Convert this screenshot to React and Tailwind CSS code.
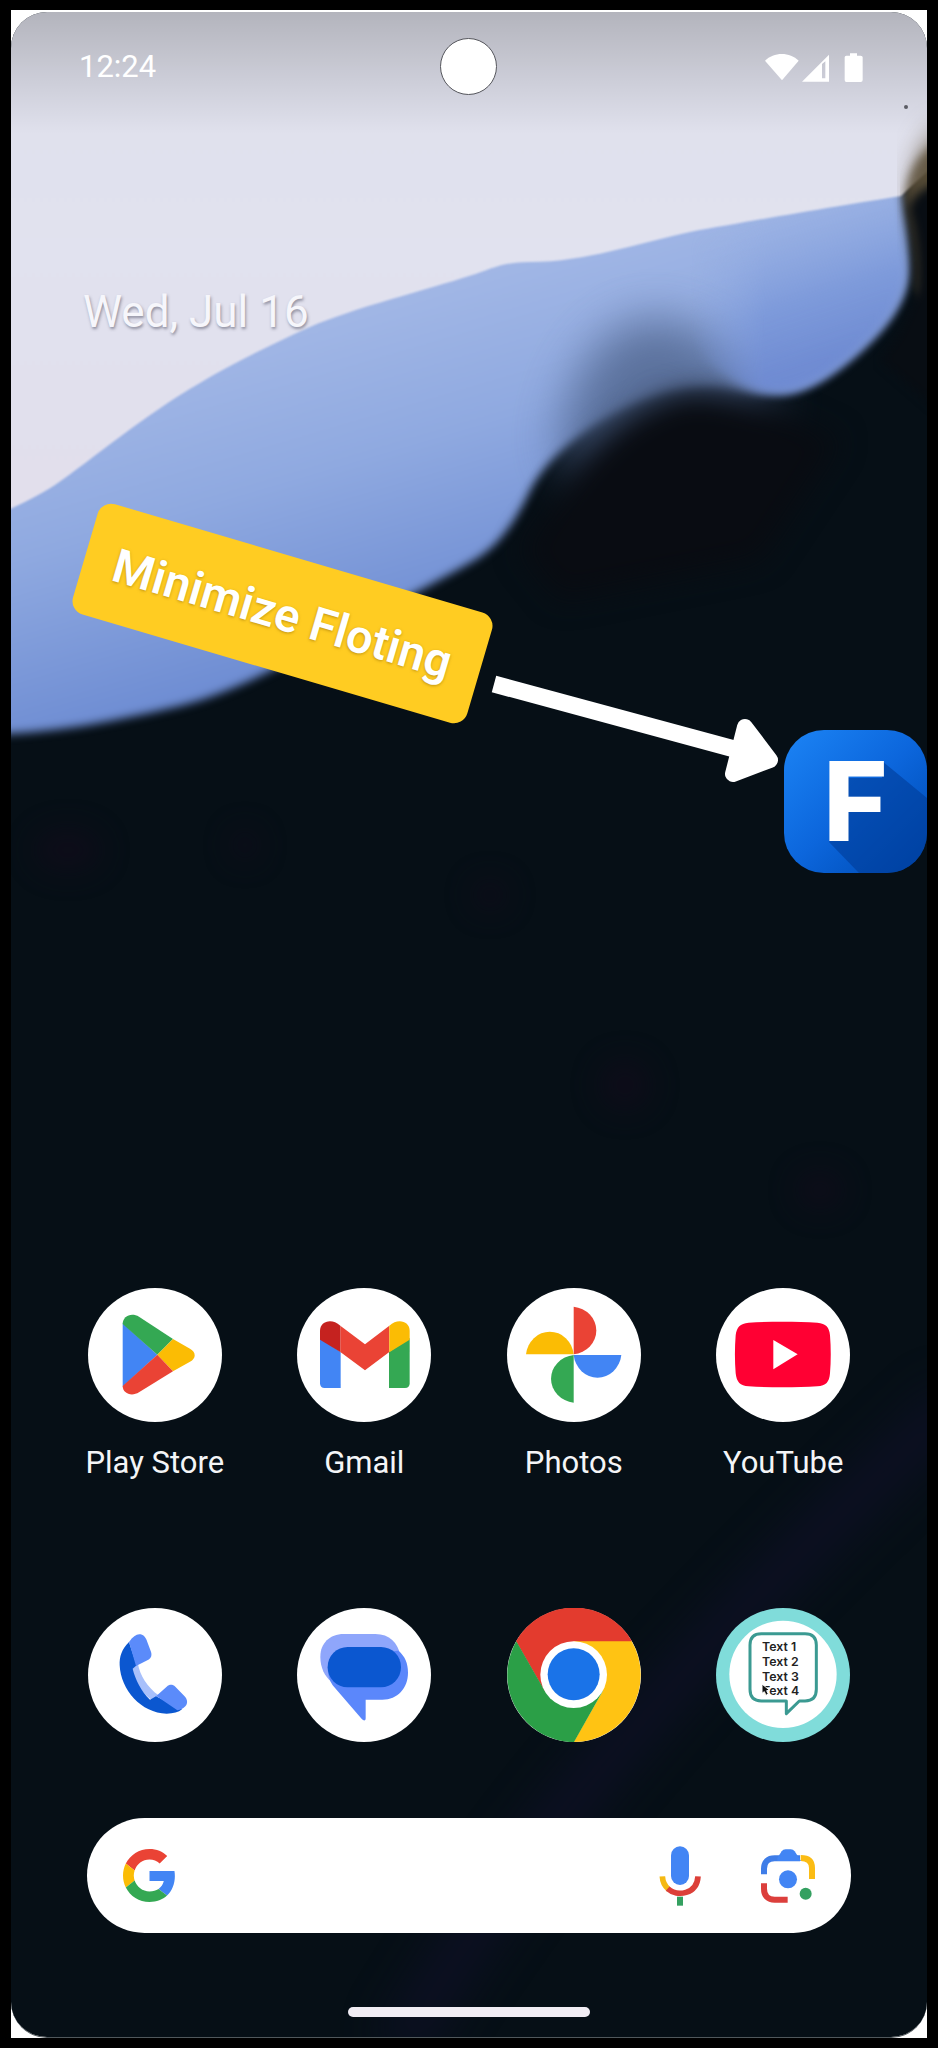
import React from "react";

function Wallpaper() {
  return (
    <svg
      className="absolute inset-0 h-full w-full"
      viewBox="11 12 916 2025"
      preserveAspectRatio="none"
      aria-hidden="true"
    >
      <defs>
        <linearGradient id="mist" x1="0" y1="0" x2="0" y2="1">
          <stop offset="0" stopColor="#e0e1ec" />
          <stop offset="0.5" stopColor="#e1e2ef" />
          <stop offset="1" stopColor="#e2dfec" />
        </linearGradient>
        <linearGradient id="petal" gradientUnits="userSpaceOnUse" x1="330" y1="300" x2="430" y2="640">
          <stop offset="0" stopColor="#a3b8e6" />
          <stop offset="0.45" stopColor="#8fa9e0" />
          <stop offset="1" stopColor="#6c8bd2" />
        </linearGradient>
        <linearGradient id="fold" gradientUnits="userSpaceOnUse" x1="750" y1="215" x2="800" y2="370">
          <stop offset="0" stopColor="#8ea9e2" stopOpacity="0" />
          <stop offset="0.6" stopColor="#7a97d9" stopOpacity="0.85" />
          <stop offset="1" stopColor="#6f8bd2" />
        </linearGradient>
        <linearGradient id="fade" gradientUnits="userSpaceOnUse" x1="690" y1="0" x2="765" y2="0">
          <stop offset="0" stopColor="#000" />
          <stop offset="1" stopColor="#fff" />
        </linearGradient>
        <mask id="foldMask" maskUnits="userSpaceOnUse" x="600" y="150" width="340" height="300">
          <rect x="600" y="150" width="340" height="300" fill="url(#fade)" />
        </mask>
        <linearGradient id="shade" x1="0" y1="0" x2="0" y2="1">
          <stop offset="0" stopColor="#000" stopOpacity="0.2" />
          <stop offset="0.4" stopColor="#000" stopOpacity="0.12" />
          <stop offset="1" stopColor="#000" stopOpacity="0" />
        </linearGradient>
        <filter id="blur1" x="-10%" y="-10%" width="120%" height="120%" colorInterpolationFilters="sRGB">
          <feGaussianBlur stdDeviation="1" />
        </filter>
        <filter id="blur5" x="-10%" y="-10%" width="120%" height="120%" colorInterpolationFilters="sRGB">
          <feGaussianBlur stdDeviation="5" />
        </filter>
        <filter id="blur14" x="-60%" y="-60%" width="220%" height="220%" colorInterpolationFilters="sRGB">
          <feGaussianBlur stdDeviation="14" />
        </filter>
        <filter id="blur24" x="-60%" y="-60%" width="220%" height="220%" colorInterpolationFilters="sRGB">
          <feGaussianBlur stdDeviation="24" />
        </filter>
      </defs>
      <rect x="11" y="12" width="916" height="2025" fill="#060f16" />
      <path
        filter="url(#blur24)"
        fill="none"
        stroke="#131030"
        strokeWidth="40"
        opacity="0.6"
        d="M400 2050C520 1840 700 1640 960 1400"
      />
      <g filter="url(#blur14)" fill="#150a1c" opacity="0.5">
        <ellipse cx="68" cy="850" rx="34" ry="22" />
        <ellipse cx="245" cy="845" rx="14" ry="16" />
        <ellipse cx="490" cy="895" rx="18" ry="16" />
        <ellipse cx="625" cy="1085" rx="26" ry="26" />
        <ellipse cx="820" cy="1190" rx="24" ry="20" />
      </g>
      <path
        filter="url(#blur5)"
        fill="url(#petal)"
        d="M-20 180H901C903 215 909 245 908 275C905 305 885 328 862 350C835 374 805 396 775 395C745 396 730 388 710 388C670 388 640 400 604 420C570 440 546 462 532 487C518 516 505 540 478 558C440 581 395 602 340 634C285 664 230 694 180 706C110 722 60 733 -20 735Z"
      />
      <path filter="url(#blur24)" fill="#4a5f86" opacity="0.75" d="M560 450C565 390 590 335 640 320C690 312 730 350 780 400L700 470L590 500Z" />
      <path filter="url(#blur14)" fill="#090c12" d="M556 500C580 455 622 412 680 394C720 388 745 404 780 412L840 440L760 560L560 600L520 550Z" />
      <g mask="url(#foldMask)">
        <path
          filter="url(#blur5)"
          fill="url(#fold)"
          d="M660 190H899C904 230 907 250 906 275C903 303 884 326 860 348C834 372 804 393 775 392C750 392 732 380 712 366C680 340 660 270 660 190Z"
        />
      </g>
      <path
        filter="url(#blur1)"
        fill="url(#mist)"
        d="M0 0H940V160L901 196C850 204 750 221 690 232C635 244 585 262 530 262C500 262 490 270 469 276C433 288 350 309 310 327C265 347 225 368 200 383C150 411 90 461 55 485C35 498 20 504 0 514Z"
      />
      <path filter="url(#blur14)" d="M950 125C926 138 914 170 918 210L950 300Z" fill="#5c4c30" />
      <path filter="url(#blur5)" d="M950 138C928 146 909 160 905 196C914 230 918 250 916 290L950 340Z" fill="#5c503a" opacity="0.8" />
      <path filter="url(#blur5)" d="M950 176C925 188 912 194 909 210C916 232 919 260 917 290C908 320 898 340 880 360L950 420Z" fill="#080d13" />
      <circle cx="906" cy="107" r="2" fill="#5f6068" />
      <rect x="11" y="12" width="916" height="122" fill="url(#shade)" />
    </svg>
  );
}

function StatusIcons() {
  return (
    <svg className="h-[30px] w-[98px]" viewBox="892 154 294 90" fill="#fff" role="img" aria-label="Wi-Fi, signal and battery">
      <path d="M892 180C918 153 967 153 993 180L943 239Z" />
      <path fillRule="evenodd" d="M1084 162V243H1003ZM1063 190V233H1073V182Z" />
      <path d="M1131 170Q1131 165 1136 165H1147V158H1168V165H1179Q1185 165 1185 170V238Q1185 244 1179 244H1136Q1131 244 1131 238Z" />
    </svg>
  );
}

function PlayIcon() {
  return (
    <g>
      <path fill="#4285f4" d="M104 106L208 200L104 296Z" />
      <path fill="#34a853" d="M104 108C104 84 130 72 153 86L255 153L208 200Z" />
      <path fill="#fbbc04" d="M255 153L306 182C325 193 325 211 306 221L255 250L208 200Z" />
      <path fill="#ea4335" d="M208 200L255 250L153 313C130 327 104 316 104 294Z" />
    </g>
  );
}

function GmailIcon() {
  return (
    <g>
      <path fill="#4285f4" d="M69 150L131 192V300H83Q69 300 69 286Z" />
      <path fill="#34a853" d="M338 150L276 192V300H324Q338 300 338 286Z" />
      <path fill="#ea4335" d="M130 113L204 169L277 113V192L204 247L130 192Z" />
      <path fill="#c5221f" d="M69 155V128C69 101 103 88 130 113V192Z" />
      <path fill="#fbbc04" d="M338 155V128C338 101 304 88 277 113V193Z" />
    </g>
  );
}

function PhotosIcon() {
  return (
    <g>
      <path fill="#ea4335" d="M200 56A77 72 0 0 1 200 199Z" />
      <path fill="#fbbc04" d="M57 199A72 77 0 0 1 200 199Z" />
      <path fill="#4285f4" d="M343 201A72 77 0 0 1 200 201Z" />
      <path fill="#34a853" d="M200 344A77 72 0 0 1 200 201Z" />
    </g>
  );
}

function YouTubeIcon() {
  return (
    <g>
      <path
        fill="#ff0033"
        d="M98 104C160 100 242 100 304 104C330 106 340 118 342 142C345 180 345 220 342 256C340 282 330 294 304 295C242 299 160 299 98 295C72 294 62 282 59 256C56 220 56 180 59 142C62 118 72 106 98 104Z"
      />
      <path fill="#fff" d="M172 156L245 199L172 244Z" />
    </g>
  );
}

function PhoneIcon() {
  return (
    <g>
      <path fill="#a8c0fb" d="M128 180L150 168C155 200 178 238 212 262L195 278C160 256 138 218 128 180Z" />
      <path
        fill="#0b57d0"
        d="M123 102C101 124 94 146 95 172C98 245 160 316 236 317C256 317 272 313 282 304L204 265L186 275C160 250 142 215 134 182L146 172Z"
      />
      <path fill="#5b8bfa" d="M123 102C134 87 144 79 154 79C166 79 172 87 176 97L189 131C192 142 190 149 181 155L144 174Z" />
      <path fill="#5b8bfa" d="M205 264L236 236C245 228 254 229 262 236L289 264C299 274 300 286 292 295C286 301 277 306 268 307Z" />
    </g>
  );
}

function MessagesIcon() {
  return (
    <g>
      <path fill="#8fa6fb" d="M140 78H235C278 78 302 104 310 142L250 237H140L104 222C82 204 70 178 70 146C70 106 98 78 140 78Z" />
      <path fill="#5b87fb" d="M92 177L150 140L304 128C324 144 333 166 333 194C333 240 302 275 256 275H206V331C206 339 200 339 195 334L107 232C97 218 92 198 92 177Z" />
      <rect fill="#0b57d0" x="92" y="117" width="220" height="121" rx="60" />
    </g>
  );
}

function ChromeIcon() {
  return (
    <g>
      <path fill="#e33b2e" d="M27 100A200 200 0 0 1 375 100L201 201L113 250Z" />
      <path fill="#ffc313" d="M374 100A201 201 0 0 1 200 402L287 250L200 201V100Z" />
      <path fill="#2b9f47" d="M201 402A201 201 0 0 1 28 100L114 250L200 201L287 250Z" />
      <circle cx="200" cy="200" r="100" fill="#fff" />
      <circle cx="200" cy="199" r="78" fill="#1a73e8" />
    </g>
  );
}

function TextAppIcon() {
  return (
    <g>
      <circle cx="201" cy="199" r="161" fill="#fff" />
      <path
        fill="none"
        stroke="#3b9a92"
        strokeWidth="9"
        strokeLinejoin="round"
        d="M136 77H267Q301 77 301 111V244Q301 279 267 279H250L211 317V279H136Q102 279 102 244V111Q102 77 136 77Z"
      />
      <g fill="#222" fontFamily="Inter, sans-serif" fontWeight="600" fontSize="37">
        <text x="138" y="130">Text 1</text>
        <text x="138" y="174">Text 2</text>
        <text x="138" y="218">Text 3</text>
        <text x="138" y="262">Text 4</text>
      </g>
      <path fill="#111" stroke="#fff" strokeWidth="3" d="M138 228V256L145 251L150 262L157 258L152 248L161 247Z" />
    </g>
  );
}

function AppTile({ name, label, plate, children }) {
  return (
    <a href="#" aria-label={name} className="flex flex-col items-center">
      <svg className="size-[134px]" viewBox="0 0 402 402" aria-hidden="true">
        <circle cx="201" cy="201" r="201" fill={plate} />
        {children}
      </svg>
      {label && (
        <span className="mt-[23px] text-[31px] leading-9 whitespace-nowrap text-[#f4f5f7]">{label}</span>
      )}
    </a>
  );
}

function GoogleLogo() {
  return (
    <svg className="size-[53px]" viewBox="0 0 48 48" role="img" aria-label="Google">
      <path fill="#ea4335" d="M24 9.5c3.54 0 6.71 1.22 9.21 3.6l6.85-6.85C35.9 2.38 30.47 0 24 0 14.62 0 6.51 5.38 2.56 13.22l7.98 6.19C12.43 13.72 17.74 9.5 24 9.5z" />
      <path fill="#4285f4" d="M46.98 24.55c0-1.57-.15-3.09-.38-4.55H24v9.02h12.94c-.58 2.96-2.26 5.48-4.78 7.18l7.73 6c4.51-4.18 7.09-10.36 7.09-17.65z" />
      <path fill="#fbbc05" d="M10.53 28.59c-.48-1.45-.76-2.99-.76-4.59s.27-3.14.76-4.59l-7.98-6.19C.92 16.46 0 20.12 0 24c0 3.88.92 7.54 2.56 10.78l7.97-6.19z" />
      <path fill="#34a853" d="M24 48c6.48 0 11.93-2.13 15.89-5.81l-7.73-6c-2.15 1.45-4.92 2.3-8.16 2.3-6.26 0-11.57-4.22-13.47-9.91l-7.98 6.19C6.51 42.62 14.62 48 24 48z" />
    </svg>
  );
}

function MicIcon() {
  return (
    <svg className="h-[60px] w-[42px]" viewBox="480 166 126 180" fill="none" aria-hidden="true">
      <rect x="516" y="167" width="54" height="116" rx="27" fill="#4285f4" />
      <path d="M490 257C491 274 498 287 509 296" stroke="#f5b912" strokeWidth="17" />
      <path d="M506 294C535 320 594 310 597 257" stroke="#dc3f38" strokeWidth="17" />
      <path d="M543 318V345" stroke="#34a060" strokeWidth="18" />
    </svg>
  );
}

function LensIcon() {
  return (
    <svg className="size-[54px]" viewBox="783 173 162 162" fill="none" aria-hidden="true">
      <path d="M902 200C926 200 936 211 936 230V263" stroke="#fbbc14" strokeWidth="18" />
      <path d="M792 249V232C792 212 804 201 824 201H900" stroke="#3f7de8" strokeWidth="18" />
      <path d="M832 200L845 180Q849 174 857 174H872Q880 174 884 180L903 209H832Z" fill="#4285f4" />
      <path d="M792 276V292C792 314 804 325 824 325H863" stroke="#dc3f3c" strokeWidth="18" />
      <circle cx="864" cy="264" r="27" fill="#4285f4" />
      <circle cx="917" cy="307" r="18" fill="#34a060" />
    </svg>
  );
}

function FloatingButton() {
  return (
    <button
      type="button"
      aria-label="Open floating app"
      className="absolute top-[718px] right-0 flex size-[143px] items-center justify-center overflow-hidden rounded-[40px] bg-linear-to-br from-[#1c84f5] via-[#0c66dc] to-[#0048b0]"
    >
      <svg className="absolute inset-0 h-full w-full" viewBox="0 0 143 143" aria-hidden="true">
        <path d="M98 31L143 68V143H75L45 112L64 80V48H98Z" fill="#003c98" opacity="0.6" />
      </svg>
      <span className="relative font-[Inter,sans-serif] text-[110px] leading-[143px] font-extrabold text-white">F</span>
    </button>
  );
}

export default function App() {
  return (
    <div className="flex min-h-screen flex-col bg-black px-[11px] py-[10px] font-[Roboto,sans-serif] text-white">
      <div className="flex flex-1 flex-col bg-white pt-[2px]">
        <main className="relative flex flex-1 flex-col overflow-hidden rounded-[36px] border-b border-[#50585c]">
          <Wallpaper />

          <header className="relative mt-[26px] grid grid-cols-3 items-center px-16">
            <time className="pl-1 text-[31px] leading-9">12:24</time>
            <span className="size-[57px] justify-self-center rounded-full border border-[#55565c] bg-white" />
            <span className="justify-self-end">
              <StatusIcons />
            </span>
          </header>

          <p className="relative mt-[190px] px-[72px] text-[44px] leading-[54px] text-[#f6f6fb] [text-shadow:1px_2px_3px_rgba(60,60,80,0.5)]">
            Wed, Jul 16
          </p>

          <div className="absolute top-[544px] left-[66px] flex h-[115px] w-[411px] rotate-[16.4deg] items-center justify-center rounded-[14px] bg-[#ffcc22]">
            <span className="text-[47px] leading-[56px] font-semibold whitespace-nowrap [text-shadow:0_1px_3px_rgba(150,110,0,0.6)]">
              Minimize Floting
            </span>
          </div>

          <svg className="absolute top-[658px] left-[475px] h-[120px] w-[300px]" viewBox="486 670 300 120" aria-hidden="true">
            <path d="M494 684L738 750" stroke="#fff" strokeWidth="17" />
            <path d="M745 727L770 760L733 774Z" fill="#fff" stroke="#fff" strokeWidth="16" strokeLinejoin="round" />
          </svg>

          <FloatingButton />

          <div className="relative mt-auto flex flex-col items-stretch pb-5">
            <nav aria-label="Apps" className="grid grid-cols-4 px-[39px]">
              <AppTile name="Play Store" label="Play Store" plate="#fff"><PlayIcon /></AppTile>
              <AppTile name="Gmail" label="Gmail" plate="#fff"><GmailIcon /></AppTile>
              <AppTile name="Photos" label="Photos" plate="#fff"><PhotosIcon /></AppTile>
              <AppTile name="YouTube" label="YouTube" plate="#fff"><YouTubeIcon /></AppTile>
            </nav>
            <nav aria-label="Dock" className="mt-[127px] grid grid-cols-4 px-[39px]">
              <AppTile name="Phone" plate="#fff"><PhoneIcon /></AppTile>
              <AppTile name="Messages" plate="#fff"><MessagesIcon /></AppTile>
              <AppTile name="Chrome" plate="#fff"><ChromeIcon /></AppTile>
              <AppTile name="Text" plate="#80dcda"><TextAppIcon /></AppTile>
            </nav>
            <form role="search" className="mx-[76px] mt-[76px] flex h-[115px] items-center rounded-full bg-white px-9">
              <GoogleLogo />
              <input type="search" aria-label="Search" className="mx-4 h-16 min-w-0 flex-1 bg-transparent text-[31px] text-gray-900 outline-none" />
              <button type="button" aria-label="Voice search" className="mr-[60px]"><MicIcon /></button>
              <button type="button" aria-label="Search with camera"><LensIcon /></button>
            </form>
            <span className="mt-[74px] h-[10px] w-[242px] self-center rounded-full bg-[#f1edf4]" />
          </div>
        </main>
      </div>
    </div>
  );
}
